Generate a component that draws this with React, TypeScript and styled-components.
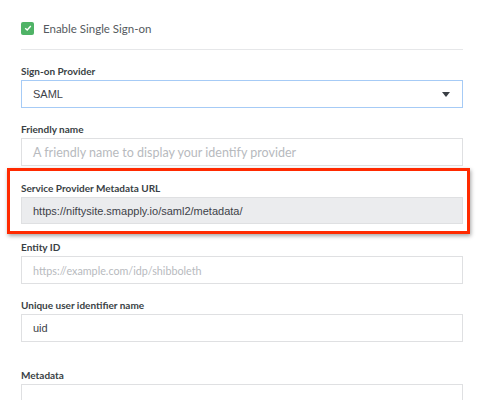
import styled, { createGlobalStyle } from "styled-components";

const GlobalStyle = createGlobalStyle`
  body {
    margin: 0;
    background: #ffffff;
    font-family: Lato, "Noto Sans", sans-serif;
  }
`;

const Page = styled.div`
  width: 489px;
  height: 400px;
  overflow: hidden;
  padding: 0 26px 0 21px;
  box-sizing: border-box;
`;

const CheckRow = styled.label`
  display: flex;
  align-items: center;
  gap: 9px;
  height: 50px;
  padding-top: 7px;
  box-sizing: border-box;
  border-bottom: 1px solid #e6e7e9;
  font-size: 11.5px;
  color: #555a60;
`;

const CheckBox = styled.span`
  width: 13px;
  height: 13px;
  border-radius: 2px;
  background: #4fb366;
  display: flex;
  align-items: center;
  justify-content: center;
`;

const Field = styled.div<{ $gap?: number }>`
  position: relative;
  margin-top: ${(p) => p.$gap ?? 14}px;
  display: flex;
  flex-direction: column;
  gap: 2px;
`;

const Highlight = styled.div`
  position: absolute;
  left: -14px;
  right: -7px;
  top: -13px;
  bottom: -10px;
  border: 3px solid #ff2a00;
  box-shadow: 1px 2px 4px rgba(0, 0, 0, 0.35);
  pointer-events: none;
`;

const Label = styled.div`
  font-size: 10px;
  line-height: 14px;
  font-weight: 700;
  color: #3a3f45;
`;

const Box = styled.div<{ $disabled?: boolean; $focus?: boolean; $h?: number }>`
  height: ${(p) => p.$h ?? 28}px;
  box-sizing: border-box;
  border: 1px solid ${(p) => (p.$focus ? "#a6cbf6" : "#dfe0e2")};
  background: ${(p) => (p.$disabled ? "#ebecee" : "#ffffff")};
  display: flex;
  align-items: center;
  padding-right: 12px;
`;

const Value = styled.span`
  flex: 1;
  padding-left: 11px;
  font-family: "Liberation Sans", Arial, sans-serif;
  font-size: 11px;
  color: #3d4248;
  white-space: nowrap;
`;

const Placeholder = styled.span<{ $size?: number }>`
  flex: 1;
  padding-left: 11px;
  font-family: Lato, "Noto Sans", sans-serif;
  font-size: ${(p) => p.$size ?? 12.5}px;
  color: #b7babe;
  white-space: nowrap;
`;

const Caret = styled.span`
  width: 0;
  height: 0;
  border-left: 4px solid transparent;
  border-right: 4px solid transparent;
  border-top: 5px solid #3a3f45;
`;

export default function App() {
  return (
    <>
      <GlobalStyle />
      <Page>
        <CheckRow>
          <CheckBox>
            <svg width="8" height="8" viewBox="0 0 8 8">
              <path d="M1.2 4.2 L3.2 6 L6.8 2" stroke="#fff" strokeWidth="1.4" fill="none" />
            </svg>
          </CheckBox>
          Enable Single Sign-on
        </CheckRow>
        <Field $gap={14}>
          <Label>Sign-on Provider</Label>
          <Box $focus>
            <Value>SAML</Value>
            <Caret />
          </Box>
        </Field>
        <Field $gap={14}>
          <Label>Friendly name</Label>
          <Box>
            <Placeholder>A friendly name to display your identify provider</Placeholder>
          </Box>
        </Field>
        <Field $gap={15}>
          <Highlight />
          <Label>Service Provider Metadata URL</Label>
          <Box $disabled $h={27}>
            <Value>https://niftysite.smapply.io/saml2/metadata/</Value>
          </Box>
        </Field>
        <Field $gap={16}>
          <Label>Entity ID</Label>
          <Box>
            <Placeholder $size={10.75}>https://example.com/idp/shibboleth</Placeholder>
          </Box>
        </Field>
        <Field $gap={14}>
          <Label>Unique user identifier name</Label>
          <Box>
            <Value>uid</Value>
          </Box>
        </Field>
        <Field $gap={26}>
          <Label>Metadata</Label>
          <Box />
        </Field>
      </Page>
    </>
  );
}
